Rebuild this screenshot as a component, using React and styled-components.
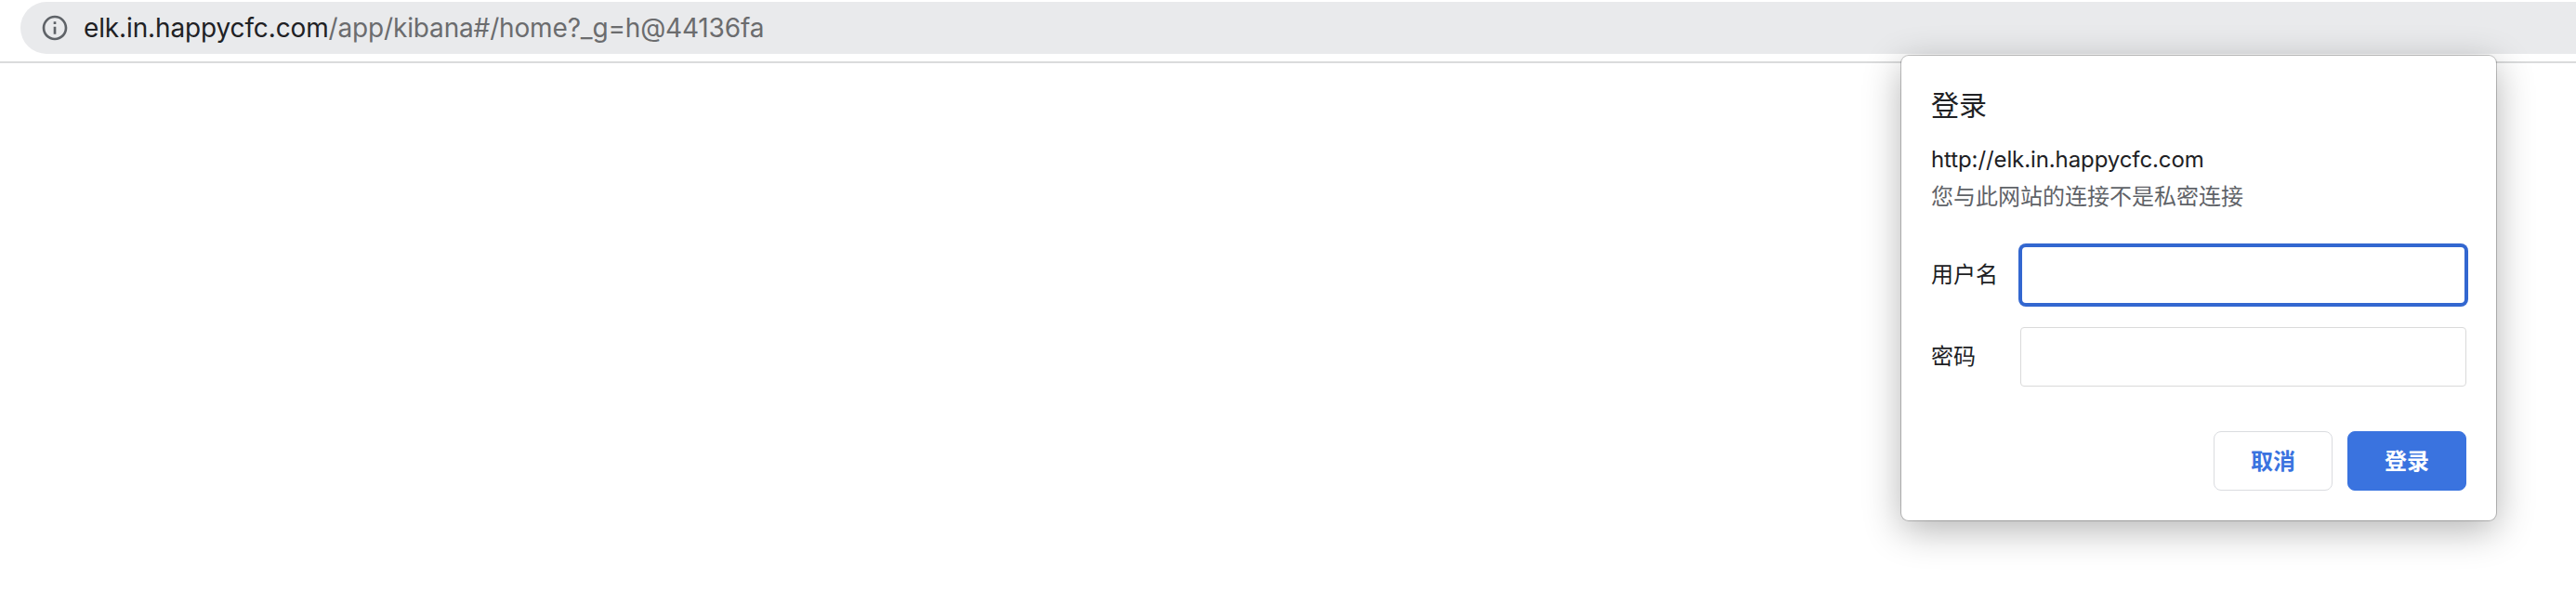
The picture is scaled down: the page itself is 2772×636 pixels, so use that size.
import React from "react";
import styled, { createGlobalStyle } from "styled-components";
import { MdInfoOutline } from "react-icons/md";

const App = () => {
    return (
        <Page>
            <GlobalStyle />
            <Toolbar>
                <AddressBar>
                    <MdInfoOutline size={32} />
                    <Url>
                        <Host>elk.in.happycfc.com</Host>
                        <Path>/app/kibana#/home?_g=h@44136fa</Path>
                    </Url>
                </AddressBar>
            </Toolbar>
            <LoginDialog />
        </Page>
    );
};

const LoginDialog = () => {
    return (
        <Dialog role="dialog">
            <Title>登录</Title>
            <Origin>http://elk.in.happycfc.com</Origin>
            <Warning>您与此网站的连接不是私密连接</Warning>
            <Form>
                <Field>
                    <Label htmlFor="username">用户名</Label>
                    <Input id="username" type="text" $active />
                </Field>
                <Field>
                    <Label htmlFor="password">密码</Label>
                    <Input id="password" type="password" />
                </Field>
            </Form>
            <Actions>
                <Button>取消</Button>
                <Button $primary>登录</Button>
            </Actions>
        </Dialog>
    );
};

export default App;

const GlobalStyle = createGlobalStyle`
    * {
        box-sizing: border-box;
    }

    body {
        margin: 0;
        background: #fff;
        font-family: Inter, "Noto Sans CJK SC", sans-serif;
        color: #202124;
    }
`;

const Page = styled.div`
    position: relative;
    height: 636px;
    overflow: hidden;
`;

const Toolbar = styled.div`
    height: 68px;
    padding: 2px 0 0 22px;
    border-bottom: 2px solid #dadbdc;
`;

const AddressBar = styled.div`
    display: flex;
    align-items: center;
    height: 56px;
    padding-left: 20.5px;
    border-radius: 28px 0 0 28px;
    background: #e9eaec;
    color: #5f6368;
`;

const Url = styled.div`
    display: flex;
    margin-left: 15.5px;
    font-size: 28px;
    line-height: 56px;
    white-space: nowrap;
`;

const Host = styled.span`
    color: #202124;
    letter-spacing: -0.13px;
`;

const Path = styled.span`
    color: #6b6c6e;
    letter-spacing: -0.16px;
`;

// Dialog
const Dialog = styled.div`
    position: absolute;
    top: 60px;
    left: 2046px;
    display: flex;
    flex-direction: column;
    width: 640px;
    height: 500px;
    padding: 32px;
    border-radius: 8px;
    background: #fff;
    box-shadow: 0 0 0 1px rgba(0, 0, 0, 0.22), 0 10px 40px rgba(0, 0, 0, 0.3);
`;

const Title = styled.div`
    height: 44px;
    font-size: 30px;
    line-height: 42px;
`;

const Origin = styled.div`
    height: 40px;
    margin-top: 16px;
    font-size: 24px;
    line-height: 40px;
    letter-spacing: -0.1px;
    white-space: nowrap;
`;

const Warning = styled.div`
    height: 40px;
    color: #5f6368;
    font-size: 24px;
    line-height: 40px;
`;

const Form = styled.div`
    display: flex;
    flex-direction: column;
    gap: 24px;
    margin-top: 32px;
`;

const Field = styled.div`
    display: flex;
    align-items: center;
    justify-content: space-between;
`;

const Label = styled.label`
    font-size: 24px;
    line-height: 40px;
`;

const Input = styled.input`
    width: 480px;
    height: 64px;
    padding: 0 16px;
    border: ${({ $active }) => ($active ? "2px solid #3367d0" : "1px solid #dadada")};
    border-radius: ${({ $active }) => ($active ? "6px" : "4px")};
    outline: none;
    box-shadow: ${({ $active }) => ($active ? "0 0 0 2px #3367d0" : "none")};
    background: #fff;
    font-size: 24px;
`;

const Actions = styled.div`
    display: flex;
    justify-content: flex-end;
    gap: 16px;
    margin-top: auto;
`;

const Button = styled.button`
    width: 128px;
    height: 64px;
    padding: 0 0 4px;
    border: 1px solid ${({ $primary }) => ($primary ? "#3a73df" : "#dadce0")};
    border-radius: 8px;
    background: ${({ $primary }) => ($primary ? "#3a73df" : "#fff")};
    color: ${({ $primary }) => ($primary ? "#fff" : "#3a73df")};
    font-family: inherit;
    font-size: 24px;
    font-weight: 600;
`;
